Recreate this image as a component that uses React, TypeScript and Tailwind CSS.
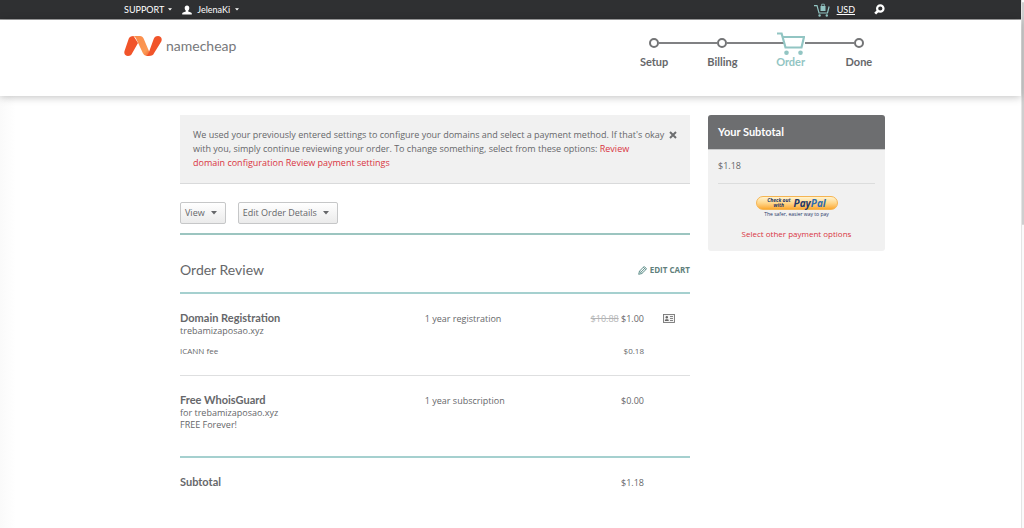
import type { ReactNode } from "react";

/* ---------------- DATA ---------------- */

const steps = [
  { label: "Setup", current: false },
  { label: "Billing", current: false },
  { label: "Order", current: true },
  { label: "Done", current: false },
];

/* ---------------- ICONS ---------------- */

function Logo() {
  return (
    <svg className="h-[22px] w-[38px]" viewBox="0 0 38 22" aria-hidden="true">
      <defs>
        <linearGradient id="fold" x1="0" y1="0" x2="1" y2="1">
          <stop offset="0" stopColor="#fb8a48" />
          <stop offset="0.75" stopColor="#fb9a55" />
          <stop offset="1" stopColor="#f4602c" />
        </linearGradient>
      </defs>
      <path d="M9.500 1C6.800 1 5.500 2 4.800 3.600L.7 15.500C-.6 18.800 1.400 21 4 21c2.300 0 3.600-1.100 4.300-2.900L14 8Z" fill="#f1542a" />
      <path d="M8.500 1h7.500c1.900 0 2.900 1 3.600 2.600L26 18.500 24 21c-2.800 0-4.300-1-5.200-3L12.500 4.500C11.500 2.200 10.800 1 8.500 1Z" fill="url(#fold)" />
      <path d="M34 1c-2.300 0-3.600 1.100-4.300 2.900L25.500 15.500C24.600 18.500 23.600 20.500 22 21h2.800c3.200 0 4.500-1 5.200-2.800L37.300 6.500C38.600 3.200 36.600 1 34 1Z" fill="#f1542a" />
    </svg>
  );
}

function Caret({ className }: { className: string }) {
  return (
    <svg className={className} viewBox="0 0 6 4" aria-hidden="true">
      <path d="M0 0h6L3 3.600Z" fill="currentColor" />
    </svg>
  );
}

function CartIcon() {
  return (
    <svg className="h-6 w-7 shrink-0 text-[#92c5c3]" viewBox="0 -1 28 24" aria-hidden="true">
      <path d="M0 11h7" stroke="#808183" strokeWidth="2" />
      <path d="M0 1.500h4.600L8.500 15.500h16L27 5H6" fill="none" stroke="currentColor" strokeWidth="2.200" />
      <circle cx="9.500" cy="20.700" r="2.300" fill="currentColor" />
      <circle cx="23.500" cy="20.700" r="2.300" fill="currentColor" />
    </svg>
  );
}

function BasketIcon() {
  return (
    <svg className="h-[14px] w-4" viewBox="0 0 16 14" aria-hidden="true">
      <path d="M0 2.700h3L5 10h8.500l1.600-6.500" fill="none" stroke="#92c5c3" strokeWidth="1.200" />
      <path d="M6.500 3h5v5h-5Z" fill="#92c5c3" />
      <path d="M7.700 3V1.200h2.600V3" fill="none" stroke="#92c5c3" strokeWidth=".8" />
      <circle cx="5.600" cy="12.500" r="1.200" fill="#92c5c3" />
      <circle cx="12.800" cy="12.500" r="1.200" fill="#92c5c3" />
    </svg>
  );
}

function UserIcon() {
  return (
    <svg className="h-[10px] w-[10px]" viewBox="0 0 10 10" aria-hidden="true">
      <path d="M5 .5c1.500 0 2.300 1 2.300 2.400C7.300 4 6.900 5 6.200 5.600v1L9 7.500c.6.200.8.500.8 1V9.500H.2V8.500c0-.5.200-.8.800-1l2.800-.9v-1C3.100 5 2.700 4 2.700 2.900 2.700 1.500 3.500.5 5 .5Z" fill="#fff" />
    </svg>
  );
}

function SearchIcon() {
  return (
    <svg className="h-[11px] w-[11px]" viewBox="0 0 11 11" aria-hidden="true">
      <circle cx="6.300" cy="4.500" r="3.200" fill="none" stroke="#fff" strokeWidth="2.200" />
      <path d="M4 6.800 1.200 9.700" stroke="#fff" strokeWidth="2.600" />
    </svg>
  );
}

function PencilIcon() {
  return (
    <svg className="h-[9px] w-[9px]" viewBox="0 0 9 9" aria-hidden="true">
      <path d="M.7 8.300 1.500 5.200 5.300 1.200 7.800 3.700 3.800 7.500ZM1.500 5.200l2.300 2.300M3 6.200l3.600-3.700M5.300 1.200 6.300.5 8.400 2.700 7.800 3.700" fill="none" stroke="#5f8f8a" strokeWidth="1" />
    </svg>
  );
}

function ContactIcon() {
  return (
    <svg className="h-[9px] w-3" viewBox="0 0 12 9" aria-hidden="true">
      <rect x=".5" y=".5" width="11" height="8" fill="#f4f4f4" stroke="#777" strokeWidth=".9" />
      <circle cx="3.800" cy="3.300" r="1.200" fill="#666" />
      <path d="M1.900 7V6c0-1 3.800-1 3.800 0v1Z" fill="#666" />
      <path d="M7 2.500h3M7 4.500h3M7 6.500h3" stroke="#777" strokeWidth=".9" />
    </svg>
  );
}

/* ---------------- PARTS ---------------- */

function TopBar() {
  return (
    <nav className="border-b border-[#a3a3a4] bg-[#2f3032] text-white">
      <div className="mx-auto flex h-[19px] max-w-[773px] items-center pr-3 text-[9px]">
        <button className="flex items-center gap-1">
          SUPPORT <Caret className="h-[3px] w-1" />
        </button>
        <button className="ml-[10px] flex items-center gap-[5px]">
          <UserIcon /> JelenaKi <Caret className="h-[3px] w-1" />
        </button>
        <button aria-label="Cart" className="ml-auto">
          <BasketIcon />
        </button>
        <a href="#currency" className="ml-[7px] underline">USD</a>
        <button aria-label="Search" className="ml-[19px]">
          <SearchIcon />
        </button>
      </div>
    </nav>
  );
}

function Steps() {
  return (
    <ol className="mr-1 flex w-[273px]">
      {steps.map((step, i) => (
        <li key={step.label} className="flex flex-1 flex-col">
          <div className="flex h-6 items-center">
            <span className={`h-[2px] flex-1 ${i === 0 ? "" : "bg-[#808183]"}`} />
            {step.current ? (
              <CartIcon />
            ) : (
              <span className="size-[10px] rounded-full border-2 border-[#737476] bg-white" />
            )}
            <span className={`h-[2px] flex-1 ${i === steps.length - 1 ? "" : "bg-[#808183]"}`} />
          </div>
          <span className={`text-center text-[11px] leading-[14px] font-bold ${step.current ? "text-[#92c5c3]" : ""}`}>
            {step.label}
          </span>
        </li>
      ))}
    </ol>
  );
}

function MenuButton({ children }: { children: ReactNode }) {
  return (
    <button className="flex h-[22px] items-center gap-[6px] rounded-[2px] border border-[#c6c7c8] bg-linear-to-b from-white to-[#ebebeb] pr-2 pl-1 text-[9px]">
      {children}
      <Caret className="h-1 w-[6px]" />
    </button>
  );
}

function Notice() {
  return (
    <div className="flex items-start border-b border-[#d9dadb] bg-[#f1f1f1] py-[13px] pr-[13px] pl-[13px]">
      <p className="flex-1 text-[9px] leading-[14px]">
        We used your previously entered settings to configure your domains and select a payment method. If that's okay
        with you, simply continue reviewing your order. To change something, select from these options:{" "}
        <a href="#domains" className="text-[#d9343f]">
          Review
          <br />
          domain configuration
        </a>{" "}
        <a href="#payment" className="text-[#d9343f]">Review payment settings</a>
      </p>
      <button aria-label="Dismiss" className="mt-[3px]">
        <svg className="size-2" viewBox="0 0 8 8" aria-hidden="true">
          <path d="m1 1 6 6M7 1 1 7" stroke="#6d6e70" strokeWidth="2" />
        </svg>
      </button>
    </div>
  );
}

function OrderTable() {
  return (
    <table className="w-full table-fixed text-left text-[9px] leading-[12px]">
      <colgroup>
        <col className="w-[48%]" />
        <col />
        <col className="w-[22%]" />
        <col className="w-[46px]" />
      </colgroup>
      <tbody className="align-top">
        <tr>
          <th scope="row" className="pt-[17px] font-normal">
            <span className="block font-['Lato',sans-serif] text-[11px] leading-[14px] font-bold">Domain Registration</span>
            trebamizaposao.xyz
          </th>
          <td className="pt-[19px]">1 year registration</td>
          <td className="pt-[19px] text-right">
            <s className="text-[#b3b4b5]">$10.88</s> $1.00
          </td>
          <td className="pt-5 pl-[19px]">
            <button aria-label="Contact details" className="block">
              <ContactIcon />
            </button>
          </td>
        </tr>
        <tr className="border-b border-[#dedfe0] text-[8px]">
          <th scope="row" className="pt-2 pb-[18px] font-normal">ICANN fee</th>
          <td />
          <td className="pt-2 text-right">$0.18</td>
          <td />
        </tr>
        <tr className="border-b-2 border-[#a5d0cf]">
          <th scope="row" className="pt-[17px] pb-[25px] font-normal">
            <span className="block font-['Lato',sans-serif] text-[11px] leading-[14px] font-bold">Free WhoisGuard</span>
            for trebamizaposao.xyz
            <br />
            FREE Forever!
          </th>
          <td className="pt-[19px]">1 year subscription</td>
          <td className="pt-[19px] text-right">$0.00</td>
          <td />
        </tr>
        <tr>
          <th scope="row" className="pt-[17px] font-['Lato',sans-serif] text-[11px] leading-[14px] font-bold">Subtotal</th>
          <td />
          <td className="pt-[19px] text-right">$1.18</td>
          <td />
        </tr>
      </tbody>
    </table>
  );
}

function Summary() {
  return (
    <aside className="w-[177px] shrink-0 overflow-hidden rounded-[3px] bg-[#f1f1f1]">
      <h2 className="border-b border-[#c9cacb] bg-[#6d6e70] px-[10px] py-[10px] font-['Lato',sans-serif] text-[11px] leading-[14px] font-bold text-white">
        Your Subtotal
      </h2>
      <div className="px-[10px] pb-[10px]">
        <p className="border-b border-[#dcdddd] pt-[9px] pb-[10px] text-[9px] leading-[14px]">$1.18</p>
        <button className="mx-auto mt-3 flex h-[14px] w-[82px] items-center justify-center gap-[3px] rounded-full border border-[#f5b452] bg-linear-to-b from-[#fff3cf] via-[#ffd78a] to-[#fba929] text-[#1f3768]">
          <span className="text-[5px] leading-[5px] font-bold italic">
            Check out
            <br />
            with
          </span>
          <span className="text-[10px] leading-[10px] font-bold italic">
            Pay<span className="text-[#2f6cb0]">Pal</span>
          </span>
        </button>
        <p className="text-center text-[5px] leading-[8px] text-[#1f3768]">The safer, easier way to pay</p>
        <a href="#payment-options" className="mt-[9px] block text-center text-[8px] leading-[14px] text-[#d9343f]">
          Select other payment options
        </a>
      </div>
    </aside>
  );
}

/* ---------------- MAIN COMPONENT ---------------- */

export default function App() {
  return (
    <div className="flex min-h-screen bg-white font-['Lato',sans-serif] text-[#66676a]">
      <div className="flex min-w-0 flex-1 flex-col">
        <TopBar />
        <header className="relative bg-white shadow-[0_1px_8px_rgba(0,0,0,0.25)]">
          <div className="mx-auto flex max-w-[773px] items-start justify-between pt-[11px] pb-[27px]">
            <a href="#home" className="mt-1 flex items-center gap-1 text-[14px] leading-[22px] text-[#77787b]">
              <Logo /> namecheap
            </a>
            <Steps />
          </div>
        </header>

        <main className="flex-1 bg-linear-to-r from-[#fafafa] to-white to-[16px] font-['Open_Sans',sans-serif]">
          <div className="mx-auto flex max-w-[773px] items-start gap-[18px] pt-[19px] pr-3 pl-14">
            <div className="min-w-0 flex-1">
              <Notice />
              <div className="flex gap-3 border-b-2 border-[#9cc5c0] pt-[18px] pb-[9px]">
                <MenuButton>View</MenuButton>
                <MenuButton>Edit Order Details</MenuButton>
              </div>
              <div className="flex items-center justify-between border-b-2 border-[#a5d0cf] pt-[25px] pb-3">
                <h1 className="font-['Lato',sans-serif] text-[14px] leading-5">Order Review</h1>
                <a href="#cart" className="flex items-center gap-[3px] text-[8px] font-bold text-[#5f7f7c]">
                  <PencilIcon /> EDIT CART
                </a>
              </div>
              <OrderTable />
            </div>
            <Summary />
          </div>
        </main>
      </div>

      {/* Thin scroll gutter */}
      <div className="w-[3px] border-l border-[#e4e4e4] bg-[#fafafa]">
        <div className="mt-[2px] h-[223px] rounded-full bg-[#cfcfcf]" />
      </div>
    </div>
  );
}
